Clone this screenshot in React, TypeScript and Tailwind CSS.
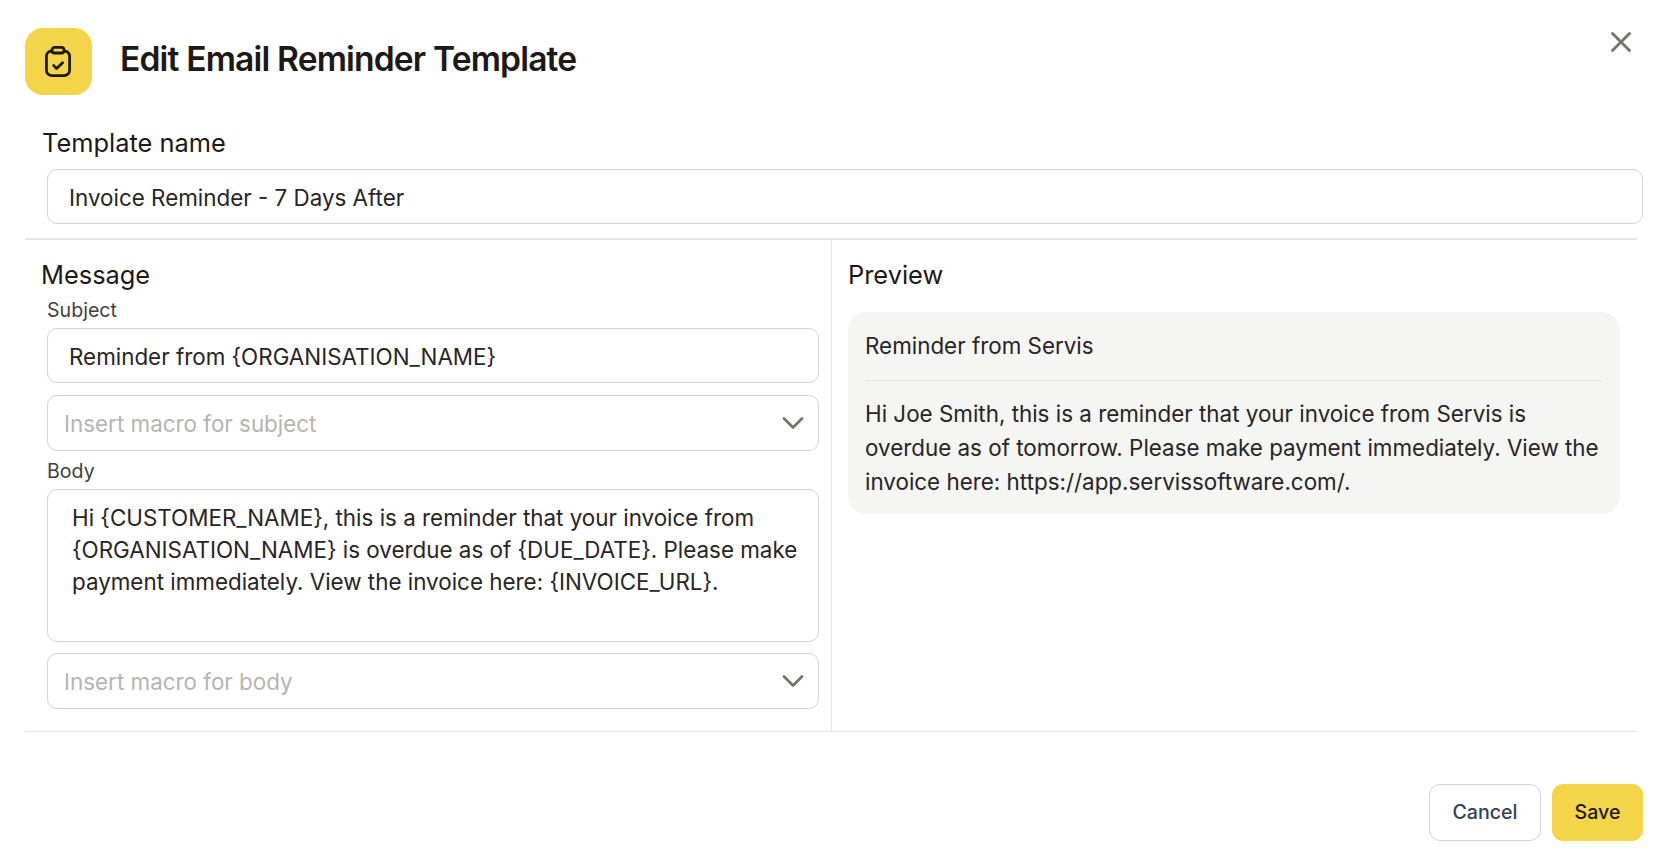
import { ChevronDown, X } from 'lucide-react';

function MacroSelect({ placeholder }: { placeholder: string }) {
  return (
    <div className="flex h-[56px] items-center justify-between rounded-[10px] border border-stone-300 pl-[16px] pr-[7px]">
      <span className="pt-[1px] text-[22.4px] text-[#b8b4b0]">{placeholder}</span>
      <ChevronDown size={36} className="text-stone-500" strokeWidth={1.8} />
    </div>
  );
}

function TextField({ value }: { value: string }) {
  return (
    <input
      readOnly
      value={value}
      className="h-[55px] w-full rounded-[10px] border border-stone-300 px-[21px] pt-[1px] text-[22.4px] text-stone-800 outline-none"
    />
  );
}

export default function App() {
  return (
    <div className="relative flex h-[852px] w-full flex-col bg-white pt-[28px] font-[Inter,sans-serif] text-stone-900">
      <button className="absolute right-[30px] top-[32px] flex h-[20px] w-[20px] items-center justify-center text-stone-500">
        <X size={34} strokeWidth={2} className="shrink-0" />
      </button>

      <div className="flex items-center gap-[28px] pl-[25px]">
        <div className="flex h-[67px] w-[67px] items-center justify-center rounded-[18px] bg-[#f4d54a]">
          <svg width="26" height="31" viewBox="0 0 26 31" fill="none" stroke="currentColor" strokeWidth="2.8" strokeLinecap="round" strokeLinejoin="round" className="mr-[2px] text-stone-900">
            <rect x="1.4" y="5" width="23.2" height="24.6" rx="5.5" />
            <rect x="7" y="1.4" width="12" height="5.6" rx="2.5" fill="#f4d54a" />
            <path d="M8.6 19.6l3 2.8 6-5.6" />
          </svg>
        </div>
        <h1 className="mb-[4px] text-[33.6px] font-semibold tracking-[-0.025em] text-stone-900">Edit Email Reminder Template</h1>
      </div>

      <div className="mt-[30px] pl-[42px] pr-[18px]">
        <label className="block text-[25.4px] leading-[36px]">Template name</label>
        <div className="ml-[5px] mt-[8px]">
          <TextField value="Invoice Reminder - 7 Days After" />
        </div>
      </div>

      <div className="ml-[25px] mr-[24px] mt-[14px] grid h-[494px] grid-cols-[807px_1fr] border-y border-b-stone-200 border-t-2 border-t-stone-200">
        <div className="border-r border-stone-200 pl-[16px] pr-[12px]">
          <h2 className="mt-[17px] text-[25.4px] leading-[36px]">Message</h2>
          <div className="pl-[6px]">
            <div className="mt-[5px] text-[19.6px] leading-[24px] text-stone-700">Subject</div>
            <div className="mt-[6px]">
              <TextField value="Reminder from {ORGANISATION_NAME}" />
            </div>
            <div className="mt-[12px]">
              <MacroSelect placeholder="Insert macro for subject" />
            </div>
            <div className="mt-[8px] text-[19.6px] leading-[24px] text-stone-700">Body</div>
            <textarea
              readOnly
              value="Hi {CUSTOMER_NAME}, this is a reminder that your invoice from {ORGANISATION_NAME} is overdue as of {DUE_DATE}. Please make payment immediately. View the invoice here: {INVOICE_URL}."
              className="mt-[6px] block h-[153px] w-full resize-none rounded-[10px] border border-stone-300 pb-[11px] pl-[24px] pr-[16px] pt-[12px] text-[22.4px] leading-[32px] text-stone-800 outline-none"
            />
            <div className="mt-[11px]">
              <MacroSelect placeholder="Insert macro for body" />
            </div>
          </div>
        </div>

        <div className="pl-[16px] pr-[17px]">
          <h2 className="mt-[17px] text-[25.4px] leading-[36px]">Preview</h2>
          <div className="mt-[19px] h-[202px] rounded-[18px] bg-stone-100 px-[17px] text-stone-800">
            <div className="border-b border-stone-200 py-[17px] text-[22.4px] leading-[34px]">Reminder from Servis</div>
            <p className="mt-[16px] text-[22.4px] leading-[34px]">
              Hi Joe Smith, this is a reminder that your invoice from Servis is overdue as of tomorrow. Please make payment immediately. View the invoice here: https://app.servissoftware.com/.
            </p>
          </div>
        </div>
      </div>

      <div className="mt-[52px] flex justify-end gap-[11px] pr-[18px]">
        <button className="h-[57px] w-[112px] rounded-[11px] border border-stone-300 bg-white text-[19.6px] font-medium text-gray-700">
          Cancel
        </button>
        <button className="h-[57px] w-[91px] rounded-[11px] bg-[#f4d54a] text-[19.6px] font-medium text-stone-900">
          Save
        </button>
      </div>
    </div>
  );
}
